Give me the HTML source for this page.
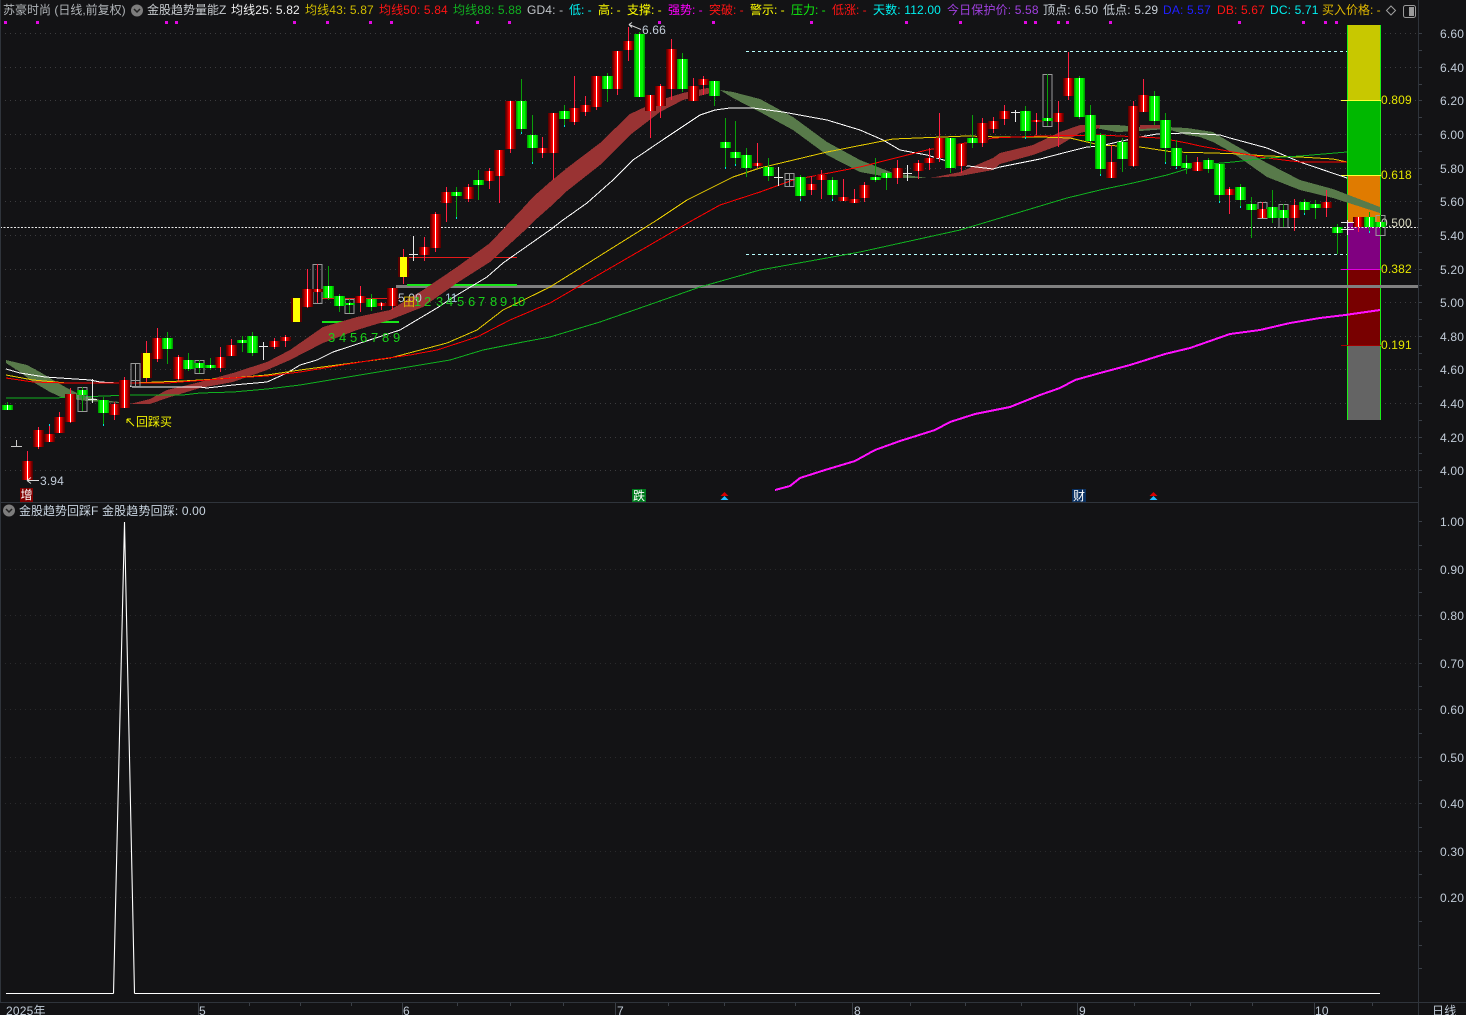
<!DOCTYPE html>
<html lang="zh">
<head>
<meta charset="utf-8">
<title>苏豪时尚 日线</title>
<style>
html,body{margin:0;padding:0;background:#131315;overflow:hidden}
svg{display:block}
text{font-family:"Liberation Sans","Noto Sans CJK SC",sans-serif;font-size:12px}
.a text{fill:#c2ccd8;letter-spacing:.2px}
.d{letter-spacing:.15px}
.ma{fill:none;stroke-width:1;shape-rendering:crispEdges}
.band{shape-rendering:crispEdges}
.seq{font-size:13px}
</style>
</head>
<body>
<svg xmlns="http://www.w3.org/2000/svg" width="1466" height="1015" viewBox="0 0 1466 1015">
<rect width="1466" height="1015" fill="#131315"/>
<defs>
<path id="rb" d="M27.5 461V480M38.5 430V447M49.5 434V442M59.5 417V433M70.5 394V422M114.5 404V415M124.5 380V408M157.5 338V359M178.5 357V379M220.5 357V368M231.5 345V356M274.5 341V347M285.5 337V341M307.5 289V307M317.5 289V292M360.5 296V303M381.5 303V306M392.5 288V306M424.5 247V255M435.5 214V248M446.5 192V203M468.5 187V199M489.5 171V181M499.5 150V176M510.5 101V149M542.5 148V153M553.5 113V153M574.5 108V122M585.5 105V112M596.5 76V107M617.5 51V89M628.5 41V50M650.5 95V111M660.5 86V106M671.5 49V89M693.5 86V101M703.5 79V85M757.5 163V166M811.5 184V190M821.5 175V180M843.5 197V201M854.5 199V203M864.5 185V198M897.5 168V178M918.5 163V171M929.5 158V163M939.5 138V158M961.5 144V166M982.5 123V143M993.5 121V129M1004.5 111V119M1036.5 120V122M1058.5 113V122M1068.5 78V96M1111.5 162V178M1133.5 106V166M1143.5 95V112M1197.5 162V171M1229.5 189V195M1262.5 209V218M1294.5 205V218M1326.5 202V208M1358.5 217V227"/>
<path id="gb" d="M7.5 405V410M82.5 390V395M103.5 400V413M167.5 338V349M188.5 360V369M199.5 363V368M210.5 365V368M242.5 340V343M252.5 336V353M328.5 286V298M339.5 296V306M349.5 303V305M371.5 299V307M456.5 192V196M478.5 180V185M521.5 101V129M532.5 135V148M564.5 111V119M607.5 76V89M639.5 34V97M682.5 59V89M714.5 81V96M725.5 142V148M735.5 152V158M746.5 155V168M768.5 167V176M800.5 177V196M832.5 180V195M875.5 177V180M886.5 173V178M950.5 138V168M972.5 138V143M1025.5 111V131M1047.5 118V121M1079.5 78V117M1090.5 115V141M1100.5 135V169M1122.5 142V159M1154.5 96V121M1165.5 120V148M1176.5 148V166M1186.5 163V168M1208.5 160V169M1219.5 164V195M1240.5 187V200M1251.5 204V210M1272.5 207V218M1283.5 210V218M1304.5 202V210M1315.5 204V208M1337.5 227V233M1369.5 217V227M1380.5 222V227"/>
<path id="yb" d="M146.5 353V378M296.5 298V322M403.5 257V277"/>
</defs>

<!-- grid -->
<path d="M0 33.5H1418M0 67.5H1418M0 100.5H1418M0 134.5H1418M0 168.5H1418M0 201.5H1418M0 235.5H1418M0 269.5H1418M0 302.5H1418M0 336.5H1418M0 369.5H1418M0 403.5H1418M0 437.5H1418M0 470.5H1418" stroke="#3c3c3e" stroke-dasharray="1 4" fill="none"/>
<path d="M0 569.5H1418M0 615.5H1418M0 663.5H1418M0 709.5H1418M0 757.5H1418M0 803.5H1418M0 851.5H1418M0 897.5H1418" stroke="#2a2a2c" stroke-dasharray="1 4" fill="none"/>

<!-- fib bar -->
<rect x="1347" y="25" width="34" height="75" fill="#c8c800"/>
<rect x="1347" y="100" width="34" height="75" fill="#00b800"/>
<rect x="1347" y="175" width="34" height="47" fill="#e07b00"/>
<rect x="1347" y="222" width="34" height="47" fill="#800080"/>
<rect x="1347" y="269" width="34" height="76" fill="#780000"/>
<rect x="1347" y="345" width="34" height="75" fill="#646464"/>
<path d="M1347.5 25V420M1380.5 25V420" stroke="#19f019" fill="none"/>
<path d="M1341 100.5H1381M1341 175.5H1381" stroke="#ffff33" fill="none"/>
<path d="M1341 269.5H1381" stroke="#e000e0" fill="none"/>
<path d="M1341 345.5H1381" stroke="#a00000" fill="none"/>
<g fill="#e6e600">
<text x="1381" y="104" class="d">0.809</text>
<text x="1381" y="179" class="d">0.618</text>
<text x="1381" y="273" class="d">0.382</text>
<text x="1381" y="349" class="d">0.191</text>
</g>
<text x="1381" y="227" fill="#d8d8c0" class="d">0.500</text>

<!-- horizontal lines -->
<path d="M746 51.5H1347M746 254.5H1347" stroke="#b8ffff" stroke-dasharray="3 3" fill="none"/>
<path d="M0 227.5H1418" stroke="#e8e8e8" stroke-dasharray="2 1.5" fill="none"/>
<rect x="396" y="285" width="1022" height="3" fill="#808080"/>
<rect x="407" y="284" width="110" height="2" fill="#19e619"/>
<rect x="322" y="321" width="77" height="2" fill="#19e619"/>
<path d="M407 257.5H517M322 298.5H399" stroke="#e61919" fill="none"/>

<!-- ribbons -->
<g fill="#587a4a" class="band">
<polygon points="6,360 27,365 40,372 53,380 67,388 77,393 100,400 120,402 130,404 120,403 87,401 63,398 50,392 33,382 20,372 6,363"/>
<polygon points="720,90 733,92 760,99 793,117 827,142 860,160 893,173 927,178 893,178 860,172 827,155 793,130 760,112 733,98"/>
<polygon points="1095,125 1117,125 1140,127 1167,127 1187,128 1200,130 1213,132 1233,144 1267,163 1300,180 1333,189 1380,207 1380,213 1333,198 1300,190 1267,177 1233,153 1213,142 1200,137 1187,135 1167,129 1140,131 1117,132 1095,128"/>
</g>
<g fill="#993333" class="band">
<polygon points="130,404 150,399 167,390 200,382 233,373 267,362 290,350 323,327 357,317 390,310 423,290 457,267 490,243 523,208 533,197 550,182 567,168 600,143 630,114 660,100 683,93 707,88 720,90 707,94 683,100 660,112 630,135 600,165 567,191 550,207 533,222 523,232 490,262 457,283 423,307 390,320 357,330 323,343 290,360 267,370 233,382 200,388 167,398 150,404"/>
<polygon points="930,178 960,172 993,158 1000,153 1033,145 1060,132 1080,125 1100,125 1100,128 1080,133 1060,145 1033,155 1000,164 993,170 960,176"/>
<polygon points="1140,125 1167,125 1167,128 1140,129"/>
</g>

<!-- moving averages -->
<polyline class="ma" stroke="#ffffff" points="6,369 20,373 45,377 90,380 100,382 118,383 133,387 200,387 207,388 233,385 267,382 287,373 300,365 317,360 333,352 400,330 437,308 457,295 487,277 503,263 550,230 563,220 587,203 613,180 633,160 667,137 700,115 715,110 730,108 753,108 783,112 827,120 860,130 883,140 900,150 927,155 960,165 993,169 1000,167 1040,159 1067,152 1087,147 1100,146 1140,137 1157,134 1187,133 1220,135 1230,138 1267,148 1300,162 1347,178"/>
<polyline class="ma" stroke="#e8cc00" points="6,375 33,380 67,383 100,383 133,383 183,381 233,378 267,375 300,370 390,358 447,343 477,330 503,310 550,287 657,220 687,200 733,177 760,168 827,152 893,139 967,136 1000,137 1040,137 1070,138 1100,145 1140,147 1173,152 1213,153 1240,154 1267,156 1300,157 1333,159 1347,162"/>
<polyline class="ma" stroke="#ff0000" points="6,378 33,382 67,383 117,383 167,383 233,378 267,376 300,372 373,360 410,355 437,350 477,337 510,320 550,303 693,220 720,205 760,192 793,180 860,167 927,150 993,138 1040,136 1100,135 1140,137 1160,138 1187,143 1200,146 1233,152 1267,158 1300,162 1347,162"/>
<polyline class="ma" stroke="#10b020" points="6,398 53,398 130,395 183,395 200,393 233,392 267,389 300,385 450,360 483,350 523,342 550,337 600,322 700,287 760,270 860,252 960,230 1027,210 1067,198 1100,190 1133,183 1167,175 1200,165 1233,162 1267,158 1300,156 1347,152"/>
<polyline fill="none" stroke="#ff10ff" stroke-width="2" shape-rendering="crispEdges" points="775,490 790,486 800,478 825,470 855,461 875,450 900,441 935,430 950,422 975,414 1010,407 1040,395 1060,388 1075,380 1100,373 1130,365 1165,354 1190,348 1230,334 1260,330 1290,323 1320,318 1345,315 1380,310"/>

<!-- hollow boxes -->
<path d="M78 387.5h9v24h-9zM131 363.5h9v23h-9zM131 380.5h9M135.5 363V386M195 360.5h9v13h-9zM313 264.5h9v39h-9zM345 299.5h9v14h-9zM785 173.5h9v13h-9zM785 179.5h9M789.5 173V186M1043 74.5h9v52h-9zM1258 202.5h9v16h-9zM1279 204.5h9v23h-9zM1376 215.5h9v20h-9z" fill="none" stroke="#9a9a9a"/>

<!-- wicks -->
<path fill="none" stroke="#ff2040" d="M27.5 451V480M38.5 427V449M49.5 424V442M59.5 412V433M70.5 388V423M114.5 402V420M124.5 377V408M146.5 341V382M157.5 328V362M178.5 355V381M220.5 347V372M231.5 339V356M274.5 338V349M285.5 335V347M307.5 269V308M317.5 264V303M360.5 286V312M381.5 302V310M392.5 288V310M403.5 249V284M424.5 237V261M435.5 212V252M446.5 187V222M468.5 184V202M489.5 168V189M499.5 150V203M510.5 101V153M542.5 137V158M553.5 113V180M574.5 76V125M585.5 96V116M596.5 76V110M617.5 51V95M628.5 27V61M650.5 95V138M660.5 84V118M671.5 39V100M693.5 78V101M703.5 76V95M757.5 143V168M811.5 176V195M821.5 170V199M843.5 179V201M854.5 189V203M864.5 182V202M897.5 160V184M918.5 160V179M929.5 148V170M939.5 113V162M961.5 144V173M982.5 118V147M993.5 117V133M1004.5 105V125M1036.5 113V135M1058.5 101V147M1068.5 52V100M1111.5 145V178M1133.5 101V167M1143.5 79V112M1197.5 157V171M1229.5 187V214M1262.5 202V218M1294.5 199V231M1326.5 190V217M1358.5 217V232"/>
<path fill="none" stroke="#0aa00a" d="M7.5 402V410M82.5 387V411M103.5 397V426M167.5 332V364M188.5 353V371M199.5 360V373M210.5 358V370M242.5 336V352M252.5 332V356M328.5 266V300M339.5 294V312M349.5 299V313M371.5 294V311M456.5 187V219M478.5 170V200M521.5 79V134M532.5 115V164M564.5 105V127M607.5 73V102M639.5 32V97M682.5 53V92M714.5 81V106M725.5 118V169M735.5 121V166M746.5 148V177M768.5 158V181M800.5 175V201M832.5 177V201M875.5 158V182M886.5 173V190M950.5 138V173M972.5 115V148M1025.5 106V139M1047.5 74V126M1079.5 76V119M1090.5 105V148M1100.5 133V176M1122.5 138V172M1154.5 91V125M1165.5 113V164M1176.5 140V169M1186.5 155V174M1208.5 158V173M1219.5 164V203M1240.5 184V208M1251.5 197V238M1272.5 190V223M1283.5 204V227M1304.5 199V215M1315.5 200V219M1337.5 224V254M1369.5 212V233M1380.5 215V235"/>
<!-- bodies -->
<use href="#rb" fill="none" stroke="#5a0000" stroke-width="11"/>
<use href="#rb" fill="none" stroke="#7a0000" stroke-width="9"/>
<use href="#rb" fill="none" stroke="#a80000" stroke-width="7"/>
<use href="#rb" fill="none" stroke="#d80000" stroke-width="5"/>
<use href="#rb" fill="none" stroke="#ff0000" stroke-width="3"/>
<use href="#rb" fill="none" stroke="#ffffff" stroke-width="1"/>
<use href="#gb" fill="none" stroke="#00a000" stroke-width="11"/>
<use href="#gb" fill="none" stroke="#00c800" stroke-width="9"/>
<use href="#gb" fill="none" stroke="#00f800" stroke-width="7"/>
<use href="#gb" fill="none" stroke="#ffffff" stroke-width="1"/>
<use href="#yb" fill="none" stroke="#5a0000" stroke-width="11"/>
<use href="#yb" fill="none" stroke="#ffff00" stroke-width="7"/>
<!-- crosses -->
<path fill="none" stroke="#e8e8e8" d="M92.5 379V403M88 399.5H97M263.5 342V360M259 346.5H268M413.5 236V261M409 254.5H418M778.5 167V186M774 177.5H783M907.5 165V181M903 173.5H912M1015.5 110V122M1011 112.5H1020M1347.5 220V235M1341 222.5H1354M1341 229.5H1354"/>
<!-- wick tips -->
<path fill="none" stroke="#00e0e0" d="M49.5 424v2M103.5 424v2M456.5 217v2M521.5 132v2M532.5 162v2M564.5 125v2M725.5 167v2M735.5 164v2M800.5 199v2M832.5 199v2M1025.5 137v2M1100.5 174v2M1165.5 162v2M1176.5 167v2M1219.5 201v2M1240.5 206v2M1304.5 213v2M1369.5 231v2"/>

<!-- annotations -->
<path d="M16.5 440V446M11 446.5H22" stroke="#c8c8c8" fill="none"/>
<path d="M27 480.5H39M27 480.5l4-3M27 480.5l4 3" stroke="#d8d8d8" fill="none"/>
<text x="40" y="485" fill="#c2ccd8" class="d">3.94</text>
<path d="M629 24.5L641 29.5M629 24.5l3-2M629 24.5l3 3" stroke="#d8d8d8" fill="none"/>
<text x="642" y="34" fill="#c2ccd8" class="d">6.66</text>
<path d="M134 426L127 419M127 419v4M127 419h4" stroke="#f0f000" fill="none"/>
<text x="136" y="426" fill="#f0f000">回踩买</text>
<rect x="20" y="488" width="13" height="14" fill="#800000"/>
<text x="20.5" y="499" fill="#ffffff">增</text>
<rect x="632" y="489" width="14" height="14" fill="#007a1e"/>
<text x="633" y="500" fill="#ffffff">跌</text>
<rect x="1072" y="489" width="14" height="14" fill="#0a3060"/>
<text x="1073" y="500" fill="#ffffff">财</text>
<path d="M724.5 492l4 4h-8zM1153.5 492l4 4h-8z" fill="#d80000"/>
<path d="M724.5 496l4 4h-8zM1153.5 496l4 4h-8z" fill="#22bbff"/>
<text class="seq" x="328 339 350 360 371 382 393" y="342" fill="#19d019">3456789</text>
<text x="398" y="302" fill="#c2ccd8" class="d">5.00</text>
<text x="403" y="306" fill="#e0b800">田</text>
<text x="445" y="302" fill="#a8c8e0">11</text>
<text class="seq" x="414 424 436 446 457 468 478 490 500 511 518" y="306" fill="#19d019">12345678910</text>

<!-- header -->
<g>
<text x="3" y="14" fill="#b0b4b8">苏豪时尚 (日线,前复权)</text>
<circle cx="137" cy="10.5" r="6" fill="#7d7d7d"/>
<path d="M134 9l3 3 3-3" stroke="#222" stroke-width="1.5" fill="none"/>
<text x="147" y="14" fill="#c8ccd0">金股趋势量能Z</text>
<text x="231" y="14" fill="#f0f0f0" class="d">均线25: 5.82</text>
<text x="305" y="14" fill="#d0bc00" class="d">均线43: 5.87</text>
<text x="379" y="14" fill="#ff1414" class="d">均线50: 5.84</text>
<text x="453" y="14" fill="#10b020" class="d">均线88: 5.88</text>
<text x="527" y="14" fill="#c0c4c8" class="d">GD4: -</text>
<text x="569" y="14" fill="#00f0f0">低: -</text>
<text x="598" y="14" fill="#ffff00">高: -</text>
<text x="627" y="14" fill="#ffff00">支撑: -</text>
<text x="668" y="14" fill="#ff00ff">强势: -</text>
<text x="709" y="14" fill="#ff1414">突破: -</text>
<text x="750" y="14" fill="#ffff00">警示: -</text>
<text x="791" y="14" fill="#10f010">压力: -</text>
<text x="832" y="14" fill="#ff1414">低涨: -</text>
<text x="873" y="14" fill="#00f0f0" class="d">天数: 112.00</text>
<text x="947" y="14" fill="#a040e0" class="d">今日保护价: 5.58</text>
<text x="1043" y="14" fill="#c8d0d8" class="d">顶点: 6.50</text>
<text x="1103" y="14" fill="#c8d0d8" class="d">低点: 5.29</text>
<text x="1163" y="14" fill="#2020ff" class="d">DA: 5.57</text>
<text x="1217" y="14" fill="#ff1414" class="d">DB: 5.67</text>
<text x="1270" y="14" fill="#00f0f0" class="d">DC: 5.71</text>
<text x="1322" y="14" fill="#e0b800">买入价格: -</text>
<path d="M1391 6l4.5 4.500-4.5 4.500-4.500-4.500z" stroke="#a0a0a0" fill="none"/>
<rect x="1403.5" y="5.5" width="12" height="12" rx="2" fill="none" stroke="#9a9a9a"/>
<rect x="1409" y="7" width="5" height="9" fill="#9a9a9a"/>
</g>
<g fill="#e00ae0">
<rect x="4" y="21" width="3" height="3"/><rect x="36" y="21" width="3" height="3"/><rect x="165" y="21" width="3" height="3"/><rect x="175" y="21" width="3" height="3"/><rect x="293" y="21" width="3" height="3"/><rect x="326" y="21" width="3" height="3"/><rect x="369" y="21" width="3" height="3"/><rect x="390" y="21" width="3" height="3"/><rect x="476" y="21" width="3" height="3"/><rect x="508" y="21" width="3" height="3"/><rect x="658" y="21" width="3" height="3"/><rect x="712" y="21" width="3" height="3"/><rect x="810" y="21" width="3" height="3"/><rect x="905" y="21" width="3" height="3"/><rect x="959" y="21" width="3" height="3"/><rect x="1024" y="21" width="3" height="3"/><rect x="1034" y="21" width="3" height="3"/><rect x="1057" y="21" width="3" height="3"/><rect x="1066" y="21" width="3" height="3"/><rect x="1109" y="21" width="3" height="3"/><rect x="1238" y="21" width="3" height="3"/><rect x="1302" y="21" width="3" height="3"/><rect x="1324" y="21" width="3" height="3"/><rect x="1335" y="21" width="3" height="3"/>
</g>

<!-- panel frame -->
<path d="M0 502.5H1418M0 1002.5H1466M1418.5 0V1015M0.5 0V1002" stroke="#2f343b" fill="none"/>

<!-- sub panel -->
<circle cx="9" cy="510.5" r="6" fill="#7d7d7d"/>
<path d="M6 509l3 3 3-3" stroke="#222" stroke-width="1.5" fill="none"/>
<text x="19" y="515" fill="#c8d4e0">金股趋势回踩F</text>
<text x="102" y="515" fill="#c8d4e0" class="d">金股趋势回踩: 0.00</text>
<path fill="none" stroke="#ffffff" d="M6 993.5H113.5M134.5 993.5H1380"/>
<polyline fill="none" stroke="#ffffff" stroke-width="1.1" points="113.5,993.5 124.5,522 134.5,993.5"/>

<!-- right axis -->
<path fill="none" stroke="#3a3f46" d="M1419 33.5h3M1419 50.5h3M1419 67.5h3M1419 84.5h3M1419 100.5h3M1419 117.5h3M1419 134.5h3M1419 151.5h3M1419 168.5h3M1419 184.5h3M1419 201.5h3M1419 218.5h3M1419 235.5h3M1419 252.5h3M1419 269.5h3M1419 285.5h3M1419 302.5h3M1419 319.5h3M1419 336.5h3M1419 353.5h3M1419 369.5h3M1419 386.5h3M1419 403.5h3M1419 420.5h3M1419 437.5h3M1419 453.5h3M1419 470.5h3M1419 487.5h3M1419 521.5h3M1419 545.5h3M1419 569.5h3M1419 592.5h3M1419 615.5h3M1419 639.5h3M1419 663.5h3M1419 686.5h3M1419 709.5h3M1419 733.5h3M1419 757.5h3M1419 780.5h3M1419 803.5h3M1419 827.5h3M1419 851.5h3M1419 874.5h3M1419 897.5h3M1419 921.5h3M1419 945.5h3M1419 968.5h3"/>
<g class="a">
<text x="1440" y="38">6.60</text><text x="1440" y="72">6.40</text><text x="1440" y="105">6.20</text><text x="1440" y="139">6.00</text><text x="1440" y="173">5.80</text><text x="1440" y="206">5.60</text><text x="1440" y="240">5.40</text><text x="1440" y="274">5.20</text><text x="1440" y="307">5.00</text><text x="1440" y="341">4.80</text><text x="1440" y="374">4.60</text><text x="1440" y="408">4.40</text><text x="1440" y="442">4.20</text><text x="1440" y="475">4.00</text>
<text x="1440" y="526">1.00</text><text x="1440" y="574">0.90</text><text x="1440" y="620">0.80</text><text x="1440" y="668">0.70</text><text x="1440" y="714">0.60</text><text x="1440" y="762">0.50</text><text x="1440" y="808">0.40</text><text x="1440" y="856">0.30</text><text x="1440" y="902">0.20</text>
<text x="6" y="1015">2025年</text><text x="199" y="1015">5</text><text x="403" y="1015">6</text><text x="617" y="1015">7</text><text x="854" y="1015">8</text><text x="1079" y="1015">9</text><text x="1315" y="1015">10</text><text x="1432" y="1015">日线</text>
</g>
<path fill="none" stroke="#3a3f46" d="M198.5 1003V1015M402.5 1003V1015M615.5 1003V1015M852.5 1003V1015M1077.5 1003V1015M1314.5 1003V1015M249.5 1003v3M300.5 1003v3M351.5 1003v3M457.5 1003v3M510.5 1003v3M563.5 1003v3M668.5 1003v3M724.5 1003v3M795.5 1003v3M910.5 1003v3M965.5 1003v3M1021.5 1003v3M1134.5 1003v3M1190.5 1003v3M1252.5 1003v3M1372.5 1003v3"/>
</svg>
</body>
</html>
